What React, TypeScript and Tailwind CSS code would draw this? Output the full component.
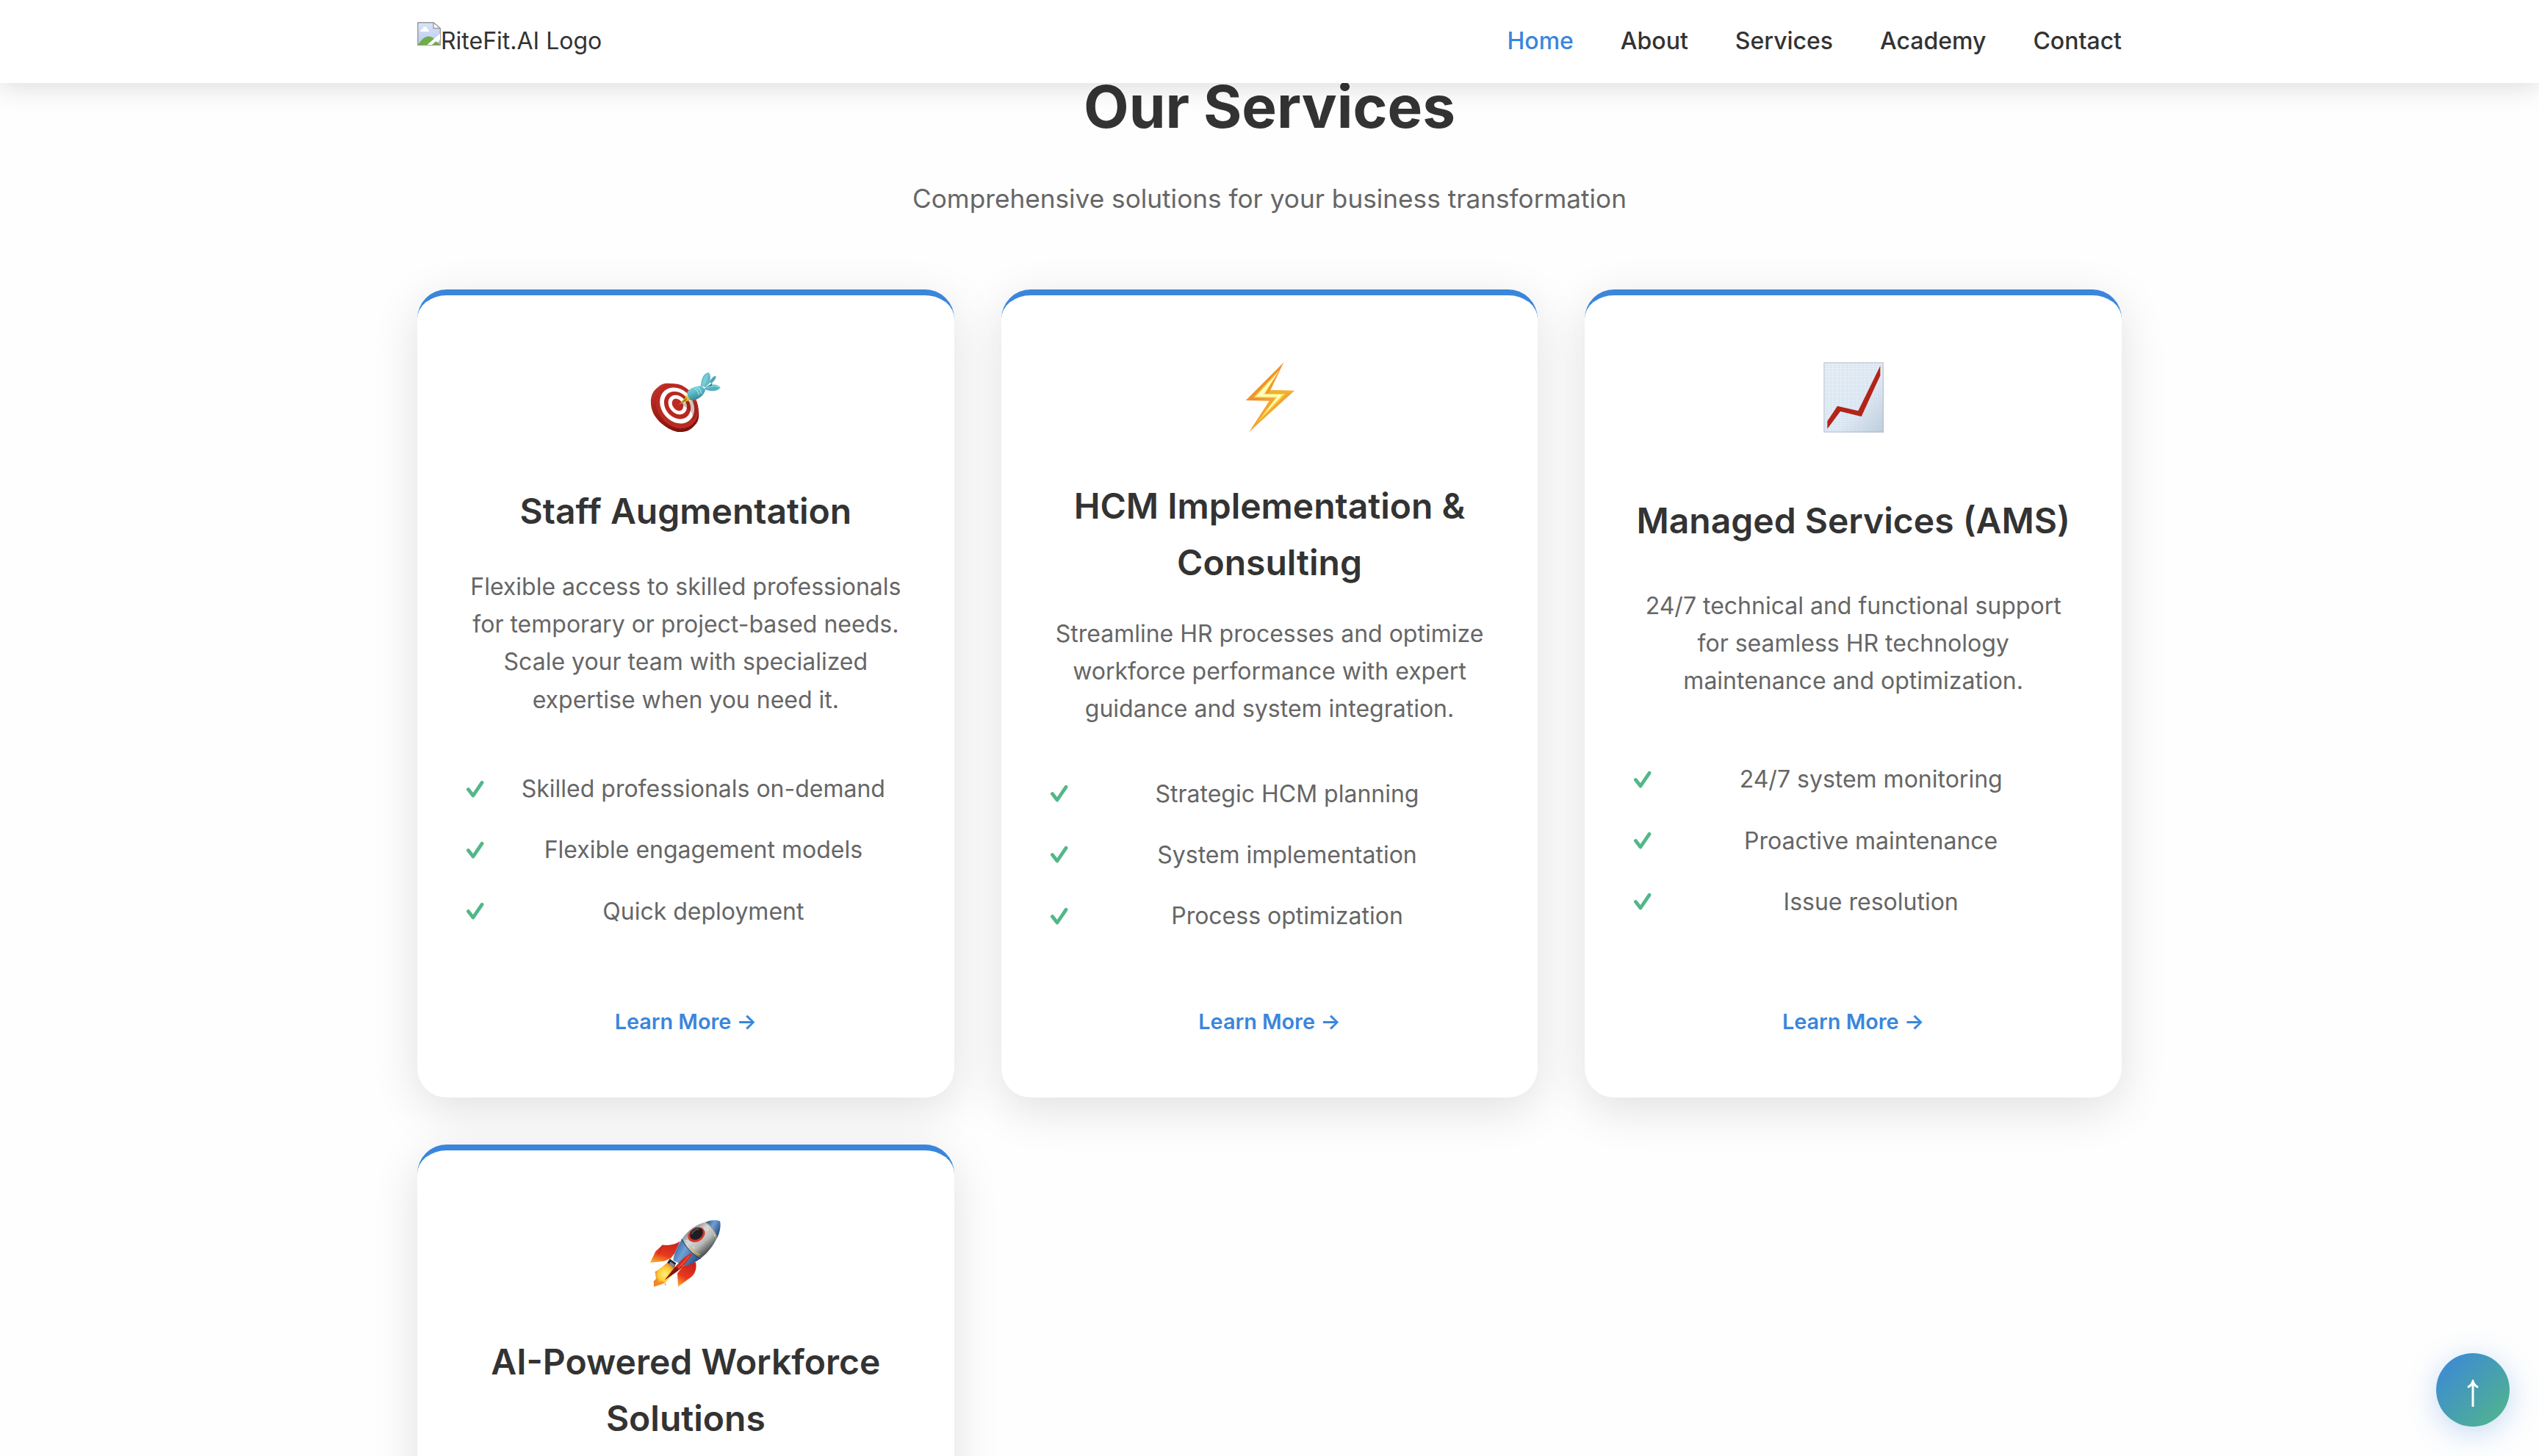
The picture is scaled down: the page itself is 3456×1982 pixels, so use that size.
import React from "react";

function BrokenImageIcon() {
  return (
    <svg width="32" height="32" viewBox="0 0 32 32" className="block shrink-0">
      <defs>
        <linearGradient id="sky" x1="0" y1="0" x2="0" y2="1">
          <stop offset="0" stopColor="#d9e4fa" />
          <stop offset="1" stopColor="#b9cbee" />
        </linearGradient>
        <clipPath id="sheet">
          <path d="M1 1H22L31 9V31H1Z" />
        </clipPath>
      </defs>
      <path d="M.7 .7H22L31.3 9V31.3H.7Z" fill="url(#sky)" stroke="#9a9a9a" strokeWidth="1.4" />
      <g clipPath="url(#sheet)">
        <path d="M1 31C6 23 11 19.5 15 19.5C21 19.5 26 25 31 31Z" fill="#6fae46" />
        <path d="M4 13C4 10 7 10 7.500 8.500C8 5.500 12.500 5.500 13.500 8.500C14 10 16 10 16 13Z" fill="#fff" />
        <path d="M11 33L33 14V22L22 33Z" fill="#fff" />
        <path d="M20 31L25.500 26L29 31Z" fill="#6fae46" />
      </g>
      <path d="M22 .7V8.500H31.3Z" fill="#fff" stroke="#9a9a9a" strokeWidth="1.3" />
    </svg>
  );
}

function TargetIcon() {
  return (
    <svg width="96" height="96" viewBox="76 36 288 288" className="block">
      <defs>
        <linearGradient id="rim" x1="0" y1="0" x2="0.7" y2="1">
          <stop offset="0" stopColor="#c93a2f" />
          <stop offset="0.5" stopColor="#9c1d16" />
          <stop offset="1" stopColor="#7a120e" />
        </linearGradient>
        <linearGradient id="dart" x1="0" y1="0" x2="0.5" y2="1">
          <stop offset="0" stopColor="#8bdbe3" />
          <stop offset="0.5" stopColor="#5cb9c6" />
          <stop offset="1" stopColor="#35808f" />
        </linearGradient>
      </defs>
      <path d="M108 141C122 126 142 122 166 127C222 138 268 184 274 238C277 268 272 284 256 299C242 314 226 324 196 325C160 322 108 288 88 246C74 214 72 166 108 141Z" fill="url(#rim)" />
      <ellipse cx="186" cy="218" rx="80" ry="98" transform="rotate(-38 186 218)" fill="#bb2a22" />
      <ellipse cx="186" cy="216" rx="64" ry="79" transform="rotate(-40 186 216)" fill="#fff" />
      <ellipse cx="187" cy="215" rx="49" ry="61" transform="rotate(-40 187 215)" fill="#b9271f" />
      <ellipse cx="188" cy="213" rx="34" ry="43" transform="rotate(-40 188 213)" fill="#fdfdfd" />
      <ellipse cx="188" cy="213" rx="20" ry="27" transform="rotate(-40 188 213)" fill="#bd2a22" />
      <path d="M194 211L246 196C262 200 270 216 270 240C262 262 254 272 246 278C256 250 244 230 194 211Z" fill="#5a1512" opacity=".28" />
      <path d="M193 213L220 182L226 176L232 186L244 194L228 197Z" fill="#d9a91f" />
      <path d="M193 213L222 188L226 192Z" fill="#8d6a12" />
      <path d="M220 176L231 184L228 196M224 172L238 194" stroke="#f5d83f" strokeWidth="3" fill="none" />
      <path d="M228 160C238 146 264 134 286 136L302 152C296 172 274 194 244 196C232 188 226 176 228 160Z" fill="url(#dart)" />
      <path d="M264 141C276 144 286 156 284 168M256 146C266 150 276 162 274 172" stroke="#a5f0f4" strokeWidth="5" fill="none" opacity=".7" />
      <path d="M283 135C284 108 294 84 314 81C324 90 324 108 318 126L302 142Z" fill="#63bbc8" />
      <path d="M288 130C290 106 300 90 314 82C312 104 306 122 296 137Z" fill="#79cdd7" />
      <path d="M318 120C326 106 334 96 344 95C347 104 338 114 326 126Z" fill="#4fa3b3" />
      <path d="M298 146C318 128 346 124 363 142C354 158 326 162 300 150Z" fill="#57b0be" />
      <path d="M300 146L330 124L326 138Z" fill="#2f7888" />
      <path d="M306 144C324 136 346 134 360 142" stroke="#8bdde4" strokeWidth="4" fill="none" />
    </svg>
  );
}

function BoltIcon() {
  return (
    <svg width="96" height="96" viewBox="30 66 288 288" className="block">
      <defs>
        <linearGradient id="bolt" x1="0" y1="0" x2="1" y2="1">
          <stop offset="0" stopColor="#f7b23a" />
          <stop offset="0.35" stopColor="#ee9030" />
          <stop offset="0.6" stopColor="#f3a83a" />
          <stop offset="1" stopColor="#ec8d30" />
        </linearGradient>
      </defs>
      <path d="M232 70L77 225L173 227L90 355L276 185L178 183Z" fill="url(#bolt)" />
      <path d="M216 98L108 214L198 215L122 318L240 198L156 197Z" fill="#fbd93a" />
      <path d="M208 112L118 210L206 211L146 288L228 201L150 200Z" fill="#fffdc4" />
      <path d="M178 184L272 186L262 194L172 194Z" fill="#efb52e" />
    </svg>
  );
}

function ChartIcon() {
  return (
    <svg width="96" height="96" viewBox="44 66 288 288" className="block overflow-visible">
      <defs>
        <pattern id="grid" x="74" y="74" width="16.500" height="16.500" patternUnits="userSpaceOnUse">
          <path d="M1 0V16.500M8 0V16.500M0 1H16.500M0 10H16.500" stroke="#b9d8f2" strokeWidth="2" opacity=".8" />
        </pattern>
        <linearGradient id="paper" x1="0" y1="0" x2="1" y2="1">
          <stop offset="0" stopColor="#f4f6f8" />
          <stop offset="0.6" stopColor="#eeeff1" />
          <stop offset="1" stopColor="#c6c7ca" />
        </linearGradient>
      </defs>
      <rect x="66" y="69" width="245" height="287" fill="url(#paper)" />
      <rect x="66" y="69" width="245" height="287" fill="url(#grid)" />
      <rect x="68" y="71" width="241" height="283" fill="none" stroke="#a9adb3" strokeWidth="4" opacity=".5" />
      <path d="M81 310L122 248L207 268L297 84V124L220 291L134 270L81 341Z" fill="#b42318" />
    </svg>
  );
}

function RocketIcon() {
  return (
    <svg width="96" height="96" viewBox="76 49.500 288 288" className="block overflow-visible">
      <defs>
        <linearGradient id="hull" x1="0.25" y1="0.2" x2="0.75" y2="0.8">
          <stop offset="0" stopColor="#8d9091" />
          <stop offset="0.3" stopColor="#d9dad7" />
          <stop offset="0.65" stopColor="#b5b8b5" />
          <stop offset="1" stopColor="#4c504f" />
        </linearGradient>
        <linearGradient id="blue" x1="0" y1="0.2" x2="1" y2="0.8">
          <stop offset="0" stopColor="#2d5a94" />
          <stop offset="0.4" stopColor="#6fa0d8" />
          <stop offset="1" stopColor="#1d3f73" />
        </linearGradient>
        <linearGradient id="fin" x1="0.6" y1="0" x2="0.2" y2="1">
          <stop offset="0" stopColor="#c9231a" />
          <stop offset="0.6" stopColor="#e8391f" />
          <stop offset="1" stopColor="#f9a92c" />
        </linearGradient>
        <radialGradient id="flame">
          <stop offset="0" stopColor="#fff27a" />
          <stop offset="0.6" stopColor="#fbc936" />
          <stop offset="1" stopColor="#ef7f2a" />
        </radialGradient>
      </defs>
      <path d="M198 150C180 164 152 168 126 166L98 192L76 238L134 232L160 220L176 200Z" fill="url(#fin)" />
      <path d="M126 166L110 206" stroke="#a01d14" strokeWidth="2" />
      <path d="M262 236C268 262 258 284 244 296L190 336L187 282L208 254L232 236Z" fill="url(#fin)" />
      <path d="M148 236L180 254L164 290L136 322L92 336L90 314L100 304L96 276L118 260Z" fill="url(#flame)" />
      <path d="M96 310L90 336L114 328L136 320L122 312L110 318L106 300Z" fill="#f08a2c" opacity=".75" />
      <circle cx="100" cy="276" r="3" fill="#ee7a2b" />
      <circle cx="138" cy="327" r="3" fill="#ee7a2b" />
      <path d="M304 72C328 62 346 64 361 68C366 88 360 114 350 136Z" fill="url(#blue)" />
      <path d="M208 138C232 104 266 80 304 72C326 88 344 110 350 134C336 166 312 196 284 219C252 204 226 176 208 138Z" fill="url(#hull)" />
      <path d="M208 138C222 172 250 204 284 219C264 234 240 248 216 250L172 230C166 218 188 168 208 138Z" fill="url(#blue)" />
      <path d="M204 142C222 176 250 206 282 222" stroke="#3b3b3b" strokeWidth="3" fill="none" />
      <path d="M242 176C252 190 264 200 278 206" stroke="#e6b73a" strokeWidth="4" fill="none" />
      <path d="M302 73C326 90 342 110 349 134" stroke="#8a7440" strokeWidth="3" fill="none" />
      <ellipse cx="265" cy="124" rx="37" ry="28" transform="rotate(-32 265 124)" fill="#d8322a" />
      <ellipse cx="265" cy="120" rx="29" ry="22" transform="rotate(-36 265 120)" fill="#1b1f22" />
      <path d="M246 122C250 108 264 100 276 100" stroke="#50585d" strokeWidth="5" fill="none" />
      <path d="M156 222L182 240L172 258L146 238Z" fill="#23282c" />
      <path d="M160 234L176 246L170 258L152 244Z" fill="#7f898f" />
      <path d="M244 200C224 206 196 232 176 258L136 308L186 274C206 262 228 230 246 206Z" fill="#d52b1f" />
      <path d="M136 308L176 258L204 254L186 274Z" fill="#7c1710" />
      <path d="M236 210L190 262" stroke="#f0502f" strokeWidth="5" />
      <circle cx="310" cy="104" r="3" fill="#eee" />
      <circle cx="340" cy="126" r="3" fill="#eee" />
      <circle cx="225" cy="148" r="3" fill="#eee" />
      <circle cx="253" cy="177" r="3" fill="#eee" />
    </svg>
  );
}

function CheckIcon() {
  return (
    <svg
      width="32"
      height="24"
      viewBox="0 0 32 24"
      className="absolute top-1/2 left-0 -translate-y-1/2"
      fill="none"
      stroke="#52b788"
      strokeWidth="4.8"
      strokeLinecap="round"
      strokeLinejoin="round"
    >
      <path d="M5.400 12.600L12 21L24 3.300" />
    </svg>
  );
}

type Service = {
  icon: React.ReactNode;
  title: string;
  text: string;
  items: string[];
};

const services: Service[] = [
  {
    icon: <TargetIcon />,
    title: "Staff Augmentation",
    text: "Flexible access to skilled professionals for temporary or project-based needs. Scale your team with specialized expertise when you need it.",
    items: ["Skilled professionals on-demand", "Flexible engagement models", "Quick deployment"],
  },
  {
    icon: <BoltIcon />,
    title: "HCM Implementation & Consulting",
    text: "Streamline HR processes and optimize workforce performance with expert guidance and system integration.",
    items: ["Strategic HCM planning", "System implementation", "Process optimization"],
  },
  {
    icon: <ChartIcon />,
    title: "Managed Services (AMS)",
    text: "24/7 technical and functional support for seamless HR technology maintenance and optimization.",
    items: ["24/7 system monitoring", "Proactive maintenance", "Issue resolution"],
  },
  {
    icon: <RocketIcon />,
    title: "AI-Powered Workforce Solutions",
    text: "",
    items: [],
  },
];

function ServiceCard({ service }: { service: Service }) {
  return (
    <article className="flex min-h-[1100px] flex-col justify-between rounded-[40px] border-t-8 border-[#3a86dc] bg-white p-16 text-center shadow-[0_16px_64px_rgba(0,0,0,0.12)]">
      <div className="mb-8 flex h-[153.6px] justify-center pt-[26px]">{service.icon}</div>
      <h3 className="mb-8 text-[48px] leading-[76.8px] font-semibold text-[#333]">{service.title}</h3>
      {service.text && <p className="mb-12 text-[#666]">{service.text}</p>}
      {service.items.length > 0 && (
        <>
          <ul className="mb-16">
            {service.items.map((item) => (
              <li key={item} className="relative py-4 pl-12 text-[#666]">
                <CheckIcon />
                {item}
              </li>
            ))}
          </ul>
          <a className="py-4 text-[28.8px] leading-[46.1px] font-semibold text-[#3a86dc]">Learn More →</a>
        </>
      )}
      {service.items.length === 0 && <div className="grow" />}
    </article>
  );
}

export default function App() {
  return (
    <div className="relative h-[1982px] w-[3456px] overflow-hidden bg-[#fefefe] font-['Inter',sans-serif] text-[32px] leading-[51.2px] text-[#333]">
      <header className="relative z-10 h-[113px] bg-white pb-0.5 shadow-[0_8px_32px_rgba(0,0,0,0.12)]">
        <div className="mx-auto flex h-full w-[2320px] items-center justify-between">
          <div className="flex items-start">
            <BrokenImageIcon />
            <span>RiteFit.AI Logo</span>
          </div>
          <nav className="flex gap-16 font-medium">
            <a className="text-[#3a86dc]">Home</a>
            <a>About</a>
            <a>Services</a>
            <a>Academy</a>
            <a>Contact</a>
          </nav>
        </div>
      </header>

      <main className="mx-auto -mt-[32px] w-[2320px]">
        <h2 className="text-center text-[80px] leading-[128px] font-bold">Our Services</h2>
        <p className="mt-[32.5px] text-center text-[35.2px] leading-[56.3px] text-[#666]">
          Comprehensive solutions for your business transformation
        </p>
        <div className="mt-24 grid grid-cols-3 gap-16">
          {services.map((service) => (
            <ServiceCard key={service.title} service={service} />
          ))}
        </div>
      </main>

      <button className="absolute right-10 bottom-10 flex size-[100px] items-center justify-center rounded-full bg-[linear-gradient(135deg,#3a86dc,#52b788)] shadow-[0_8px_40px_rgba(58,134,220,0.3)]">
        <svg width="16" height="38" viewBox="0 0 16 38" className="mt-2.5" fill="none" stroke="#fff" strokeWidth="3">
          <path d="M8 37V3" />
          <path d="M1 10.500C4 9 7 6 8 2.500C9 6 12 9 15 10.500" />
        </svg>
      </button>
    </div>
  );
}
